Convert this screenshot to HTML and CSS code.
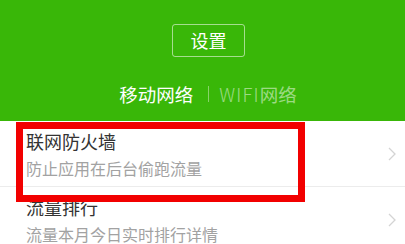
FILE: index.html
```html
<!DOCTYPE html>
<html>
<head>
  <meta charset="utf-8">
  <title>流量监控</title>
  <meta name="viewport" content="width=device-width, initial-scale=1.0">
  <link rel="stylesheet" href="styles.css">
</head>
<body>
  <div class="header">
    <div class="settings-button">设置</div>
    <div class="tabs">
      <span class="tab active">移动网络</span>
      <span class="tab-divider"></span>
      <span class="tab"><span class="latin">WIFI</span>网络</span>
    </div>
  </div>

  <div class="list">
    <div class="list-item">
      <div class="item-text">
        <div class="item-title">联网防火墙</div>
        <div class="item-desc">防止应用在后台偷跑流量</div>
      </div>
      <svg class="chevron" width="8" height="14" viewBox="0 0 8 14">
        <path d="M1 1 L7 7 L1 13" fill="none" stroke="#d4d4d4" stroke-width="1.3"/>
      </svg>
    </div>
    <div class="list-item">
      <div class="item-text">
        <div class="item-title">流量排行</div>
        <div class="item-desc">流量本月今日实时排行详情</div>
      </div>
      <svg class="chevron" width="8" height="14" viewBox="0 0 8 14">
        <path d="M1 1 L7 7 L1 13" fill="none" stroke="#d4d4d4" stroke-width="1.3"/>
      </svg>
    </div>
  </div>

  <div class="highlight"></div>
</body>
</html>
```

FILE: styles.css
```css
* {
  margin: 0;
  padding: 0;
  box-sizing: border-box;
}

body {
  width: 405px;
  height: 244px;
  overflow: hidden;
  font-family: "Noto Sans CJK SC", "Noto Sans", sans-serif;
  background: #fff;
  position: relative;
}

.header {
  height: 121px;
  background: #39b708;
  display: flex;
  flex-direction: column;
  align-items: center;
  padding-top: 24px;
}

.settings-button {
  width: 73px;
  height: 33px;
  margin-left: 12px;
  border: 1px solid rgba(255, 255, 255, 0.55);
  border-radius: 3px;
  color: #fff;
  font-size: 18px;
  line-height: 31px;
  text-align: center;
}

.tabs {
  display: flex;
  align-items: center;
  margin-top: 24px;
  margin-left: 11px;
  height: 26px;
}

.tab {
  font-size: 18.5px;
  line-height: 26px;
  color: rgba(255, 255, 255, 0.5);
}

.tab .latin {
  font-weight: 300;
  letter-spacing: 1.2px;
}

.tab.active {
  color: #fff;
}

.tab-divider {
  width: 1px;
  height: 16px;
  background: rgba(255, 255, 255, 0.4);
  margin: 0 10px 0 15px;
}

.list-item {
  height: 66px;
  display: flex;
  align-items: center;
  justify-content: space-between;
  padding: 0 9px 0 26px;
  border-bottom: 1px solid #ececec;
}

.item-title {
  font-size: 18px;
  line-height: 26px;
  color: #333;
}

.item-desc {
  font-size: 16px;
  line-height: 22px;
  margin-top: 3px;
  color: #a2a2a2;
}

.chevron {
  display: block;
}

/* annotation frame drawn over the first row */
.highlight {
  position: absolute;
  left: 16px;
  top: 122px;
  width: 289px;
  height: 80px;
  border: 7px solid #f20000;
}
```
